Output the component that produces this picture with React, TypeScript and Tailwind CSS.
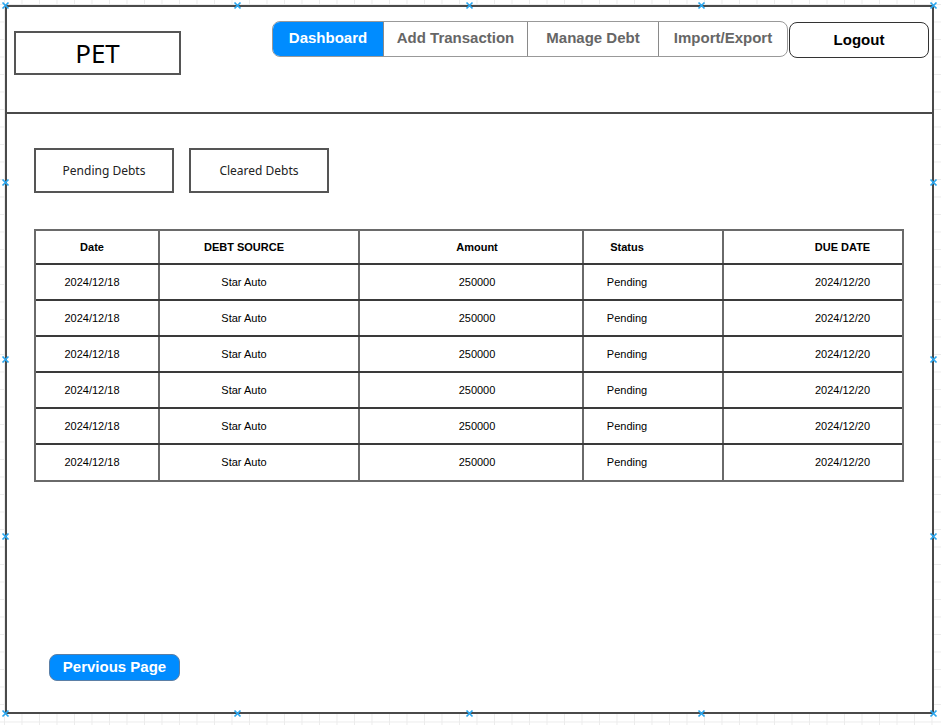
import React from "react";

const rows = Array.from({ length: 6 }, () => ({
  date: "2024/12/18",
  source: "Star Auto",
  amount: "250000",
  status: "Pending",
  due: "2024/12/20",
}));

const markers: [number, number][] = [
  [5, 5], [237, 5], [469, 5], [701, 5], [933, 5],
  [5, 713], [237, 713], [469, 713], [701, 713], [933, 713],
  [5, 182], [5, 359], [5, 536],
  [933, 182], [933, 359], [933, 536],
];

function Marker({ x, y }: { x: number; y: number }) {
  return (
    <svg
      className="absolute"
      width="9"
      height="9"
      viewBox="0 0 9 9"
      style={{ left: x - 4.5, top: y - 4.5 }}
    >
      <path d="M1.5 1.5 L7.5 7.5 M7.5 1.5 L1.5 7.5" stroke="#2aa6ee" strokeWidth="1.7" fill="none" />
    </svg>
  );
}

function Cells({ cells, bold }: { cells: string[]; bold?: boolean }) {
  const base = `flex items-center justify-center text-[11px] text-black ${bold ? "font-bold" : ""}`;
  return (
    <>
      <div className={`${base} w-[124px] pr-[10px] border-r-2 border-[#6a6a6a]`}>{cells[0]}</div>
      <div className={`${base} w-[200px] pr-[30px] border-r-2 border-[#6a6a6a]`}>{cells[1]}</div>
      <div className={`${base} w-[224px] pl-[12px] border-r-2 border-[#6a6a6a]`}>{cells[2]}</div>
      <div className={`${base} w-[140px] pr-[52px] border-r-2 border-[#6a6a6a]`}>{cells[3]}</div>
      <div className={`${base} flex-1 pl-[59px]`}>{cells[4]}</div>
    </>
  );
}

export default function App() {
  return (
    <div className="relative w-[941px] h-[725px] overflow-hidden bg-white bg-[image:linear-gradient(#ececec_1px,transparent_1px),linear-gradient(90deg,#ececec_1px,transparent_1px)] bg-[size:17.5px_17.5px] bg-[position:4px_4px] font-['Liberation_Sans',Arial,sans-serif]">
      <div className="ml-[5px] mt-[5px] w-[929px] h-[709px] border-2 border-[#4a4a4a] bg-white flex flex-col">
        {/* Header */}
        <div className="h-[107px] border-b-2 border-[#4a4a4a] flex items-start shrink-0">
          <div className="ml-[7px] mt-[24px] w-[167px] h-[44px] border-2 border-[#555] flex items-center justify-center font-['Noto_Sans',sans-serif] text-[26px] text-black">
            PET
          </div>
          <div className="ml-[91px] mt-[14px] w-[516px] h-[36px] flex border border-[#999] rounded-[8px] overflow-hidden text-[15px] font-bold">
            <div className="w-[110px] bg-[#008cff] text-white flex items-center justify-center pb-[1px]">Dashboard</div>
            <div className="w-[144px] border-l border-[#8a8a8a] text-[#666] flex items-center justify-center pb-[1px]">Add Transaction</div>
            <div className="w-[131px] border-l border-[#8a8a8a] text-[#666] flex items-center justify-center pb-[1px]">Manage Debt</div>
            <div className="flex-1 border-l border-[#8a8a8a] text-[#666] flex items-center justify-center pb-[1px]">Import/Export</div>
          </div>
          <div className="ml-[1px] mt-[15px] w-[140px] h-[36px] border border-[#333] rounded-[8px] flex items-center justify-center text-[15px] font-bold text-black">
            Logout
          </div>
        </div>

        {/* Body */}
        <div className="flex-1 flex flex-col pl-[27px] pt-[34px]">
          <div className="flex gap-[15px] font-['Noto_Sans',sans-serif] text-[12px] text-[#222]">
            <div className="w-[140px] h-[45px] border-2 border-[#555] flex items-center justify-center pt-[1px]">Pending Debts</div>
            <div className="w-[140px] h-[45px] border-2 border-[#555] flex items-center justify-center pt-[1px]">Cleared Debts</div>
          </div>

          <div className="mt-[36px] w-[870px] border-2 border-[#6a6a6a] flex flex-col">
            <div className="h-[34px] flex border-b-2 border-[#3a3a3a]">
              <Cells cells={["Date", "DEBT SOURCE", "Amount", "Status", "DUE DATE"]} bold />
            </div>
            {rows.map((r, i) => (
              <div
                key={i}
                className={`${i < rows.length - 1 ? "h-[36px] border-b-2 border-[#3a3a3a]" : "h-[35px]"} flex`}
              >
                <Cells cells={[r.date, r.source, r.amount, r.status, r.due]} />
              </div>
            ))}
          </div>

          <div className="mt-[172px] ml-[15px] w-[131px] h-[27px] rounded-[8px] bg-[#008cff] border border-[#5b7fa6] flex items-center justify-center text-white font-bold text-[15px]">
            Pervious Page
          </div>
        </div>
      </div>

      {markers.map(([x, y], i) => (
        <Marker key={i} x={x} y={y} />
      ))}
    </div>
  );
}
